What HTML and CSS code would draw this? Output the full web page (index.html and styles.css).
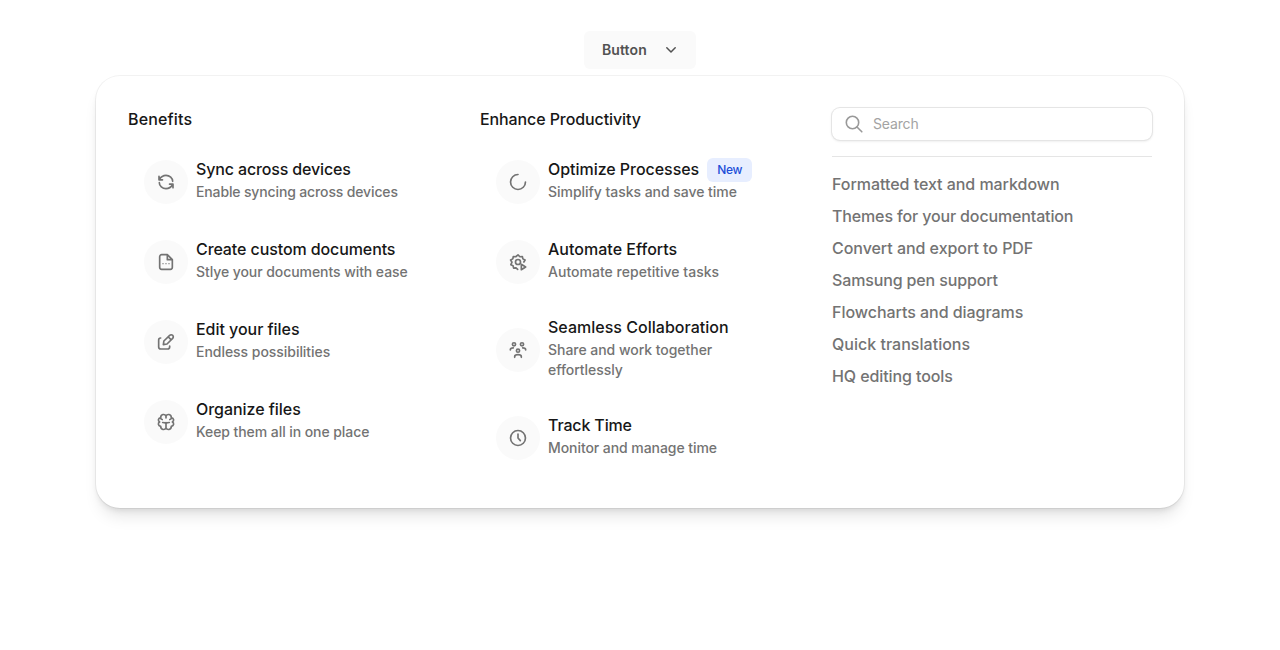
FILE: index.html
```html
<!DOCTYPE html>
<html lang="en">
<head>
<meta charset="utf-8">
<title>Menu</title>
<link rel="stylesheet" href="styles.css">
</head>
<body>
<div class="page">
  <button class="trigger"><span>Button</span>
    <svg class="chevron" viewBox="0 0 16 16"><path d="M3.8 5.8 8 10l4.2-4.2"/></svg>
  </button>
  <div class="panel">
    <section class="col">
      <h2 class="heading wide">Benefits</h2>
      <div class="item">
        <div class="circle"><svg viewBox="0 0 24 24"><path d="M1.500 3.500v5.200h5.200M22.500 20.500v-5.200h-5.200M2 8.200C4.500 4 8 2 12 2c5.500 0 10 4.200 10 9M22 15.800C19.500 20 16 22 12 22c-5.500 0-10-4.200-10-9"/></svg></div>
        <div class="text"><div class="title tight">Sync across devices</div><div class="sub tight">Enable syncing across devices</div></div>
      </div>
      <div class="item">
        <div class="circle"><svg viewBox="0 0 24 24"><path d="M14 1H5.500a3 3 0 0 0-3 3v16a3 3 0 0 0 3 3h13a3 3 0 0 0 3-3V8.500zM14 1v7.500h7.500"/><path class="dots" d="M7.500 14.500h.01M12 14.500h.01M16.500 14.500h.01"/></svg></div>
        <div class="text"><div class="title">Create custom documents</div><div class="sub">Stlye your documents with ease</div></div>
      </div>
      <div class="item">
        <div class="circle"><svg viewBox="0 0 24 24"><path d="M4 6a3 3 0 0 0-3 3v10.500a3 3 0 0 0 3 3h10.500a3 3 0 0 0 3-3V18M8 16l.8-5.500 8.700-8.500a3.100 3.100 0 0 1 4.500 4.500L13.500 15zM15.500 4.500l4 4"/></svg></div>
        <div class="text"><div class="title wide-slight">Edit your files</div><div class="sub wide-slight">Endless possibilities</div></div>
      </div>
      <div class="item">
        <div class="circle"><svg viewBox="0 0 24 24"><path d="M12 3.500C10.500-.8 4 0 4 5.500 0 6.500-.5 10.500 2.500 12-.5 13.500 0 17.500 4 18.500c0 5.500 6.500 6.300 8 2M12 3.500c1.500-4.300 8-3.500 8 2 4 1 4.500 5 1.500 6.500 3 1.500 2.500 5.500-1.500 6.500 0 5.500-6.500 6.300-8 2M12 3.500V6M12 13v7.500M4 5.500c0 1.500.8 2.500 2.300 2.800M20 5.500c0 1.500-.8 2.500-2.300 2.800M7 12.800c2.500 0 4 .3 5 1.500 1-1.200 2.500-1.500 5-1.500"/></svg></div>
        <div class="text"><div class="title wide-slight">Organize files</div><div class="sub">Keep them all in one place</div></div>
      </div>
    </section>
    <section class="col">
      <h2 class="heading">Enhance Productivity</h2>
      <div class="item">
        <div class="circle"><svg viewBox="0 0 24 24"><path d="M12 .8A11.200 11.200 0 1 0 23.200 12"/></svg></div>
        <div class="text"><div class="title wide-slight">Optimize Processes<span class="badge">New</span></div><div class="sub wide-slight">Simplify tasks and save time</div></div>
      </div>
      <div class="item">
        <div class="circle"><svg viewBox="0 0 24 24"><path d="M11.500 23 9 20.700l-3.600.4-.8-3.500-3.300-1.600L3 12.300.900 9l3.300-1.700.8-3.600 3.600.4L12 1.300l2.900 2.800 3.600-.4.800 3.600L22.600 9l-1.800 3"/><circle cx="12" cy="12" r="3.800"/><path d="M17 15.500v8l6.500-4z"/></svg></div>
        <div class="text"><div class="title wide">Automate Efforts</div><div class="sub wide">Automate repetitive tasks</div></div>
      </div>
      <div class="item">
        <div class="circle"><svg viewBox="0 0 24 24"><circle cx="6" cy="3.500" r="2.400"/><circle cx="18" cy="3.500" r="2.400"/><circle cx="12" cy="13" r="2.400"/><path d="M.5 12v-.5c0-2 1.500-2.700 4.500-2.700M23.500 12v-.5c0-2-1.500-2.700-4.500-2.700M7 23v-1c0-2 1.500-3 5-3s5 1 5 3v1"/></svg></div>
        <div class="text"><div class="title wide">Seamless Collaboration</div><div class="sub wide-slight">Share and work together<br>effortlessly</div></div>
      </div>
      <div class="item">
        <div class="circle"><svg viewBox="0 0 24 24"><circle cx="12" cy="12" r="11.200"/><path d="M12 6v6l3.500 4"/></svg></div>
        <div class="text"><div class="title tight">Track Time</div><div class="sub">Monitor and manage time</div></div>
      </div>
    </section>
    <section class="col">
      <div class="search">
        <svg viewBox="0 0 20 20"><circle cx="8.500" cy="8.500" r="6.200"/><path d="M13 13l4.800 4.800"/></svg>
        <span>Search</span>
      </div>
      <div class="divider"></div>
      <nav class="links">
        <a class="wide-slight">Formatted text and markdown</a>
        <a class="tight">Themes for your documentation</a>
        <a class="wide-slight">Convert and export to PDF</a>
        <a class="tight">Samsung pen support</a>
        <a class="wide-slight">Flowcharts and diagrams</a>
        <a class="wide">Quick translations</a>
        <a>HQ editing tools</a>
      </nav>
    </section>
  </div>
</div>
</body>
</html>
```
FILE: styles.css
```css
* { box-sizing: border-box; }
body { margin: 0; background: #fff; font-family: Inter, "Liberation Sans", sans-serif; }
svg { fill: none; stroke: currentColor; stroke-linecap: round; stroke-linejoin: round; flex: none; }
.page { display: flex; flex-direction: column; align-items: center; gap: 7px; min-height: 650px; padding-top: 31px; }
.trigger { display: flex; align-items: center; justify-content: space-between; width: 112px; height: 38px; padding: 0 17px 0 18px; border: 0; border-radius: 6px; background: #fafafa; color: #525252; font: 600 14px/20px Inter, sans-serif; letter-spacing: 0.1px; }
.chevron { width: 16px; height: 16px; stroke-width: 1.5; }
.panel { display: flex; gap: 32px; width: 1088px; height: 432px; padding: 32px 32px 30px; border-radius: 24px; background: #fff; box-shadow: 0 0 0 1px rgba(0,0,0,.05), 0 4px 6px -2px rgba(0,0,0,.1), 0 12px 16px -4px rgba(0,0,0,.1); }
.col { width: 320px; }
.heading { height: 24px; margin: 0 0 10px; font-size: 16px; font-weight: 500; line-height: 22px; color: #171717; letter-spacing: -0.1px; }
.item { display: flex; align-items: center; gap: 8px; min-height: 80px; padding: 14px 16px; }
.circle { display: flex; align-items: center; justify-content: center; width: 44px; height: 44px; border-radius: 50%; background: #fafafa; color: #737373; }
.circle svg { width: 16px; height: 16px; stroke-width: 2.5; overflow: visible; }
.circle .dots { stroke-width: 2; }
.text { padding-bottom: 4px; }
.title { display: flex; gap: 8px; height: 24px; font-size: 16px; font-weight: 500; line-height: 22px; color: #171717; letter-spacing: -0.1px; white-space: nowrap; }
.sub { font-size: 14px; font-weight: 500; line-height: 20px; color: #737373; letter-spacing: -0.07px; }
.badge { height: 24px; padding: 0 10px; border-radius: 6px; background: #e7eeff; color: #1d4ed8; font-size: 12px; line-height: 24px; letter-spacing: -0.3px; }
.search { display: flex; align-items: center; height: 32px; padding: 0 12px; gap: 9px; border-radius: 8px; color: #a3a3a3; font-size: 14px; line-height: 18px; letter-spacing: -0.15px; box-shadow: 0 0 0 1px #e5e5e5, 0 1px 3px rgba(0,0,0,.12); }
.search span { padding-bottom: 1px; }
.search svg { width: 20px; height: 20px; stroke-width: 1.6; color: #999; }
.divider { height: 1px; margin: 16px 0 12px; background: #e5e5e5; }
.links { display: flex; flex-direction: column; }
.links a { height: 32px; font-size: 16px; font-weight: 500; line-height: 30px; color: #737373; letter-spacing: -0.1px; }

/* optical tracking adjustments */
.tight, .links .tight { letter-spacing: -0.14px; }
.wide-slight, .links .wide-slight { letter-spacing: -0.04px; }
.wide, .links .wide { letter-spacing: 0.02px; }
.heading.wide { letter-spacing: 0.15px; }
```
